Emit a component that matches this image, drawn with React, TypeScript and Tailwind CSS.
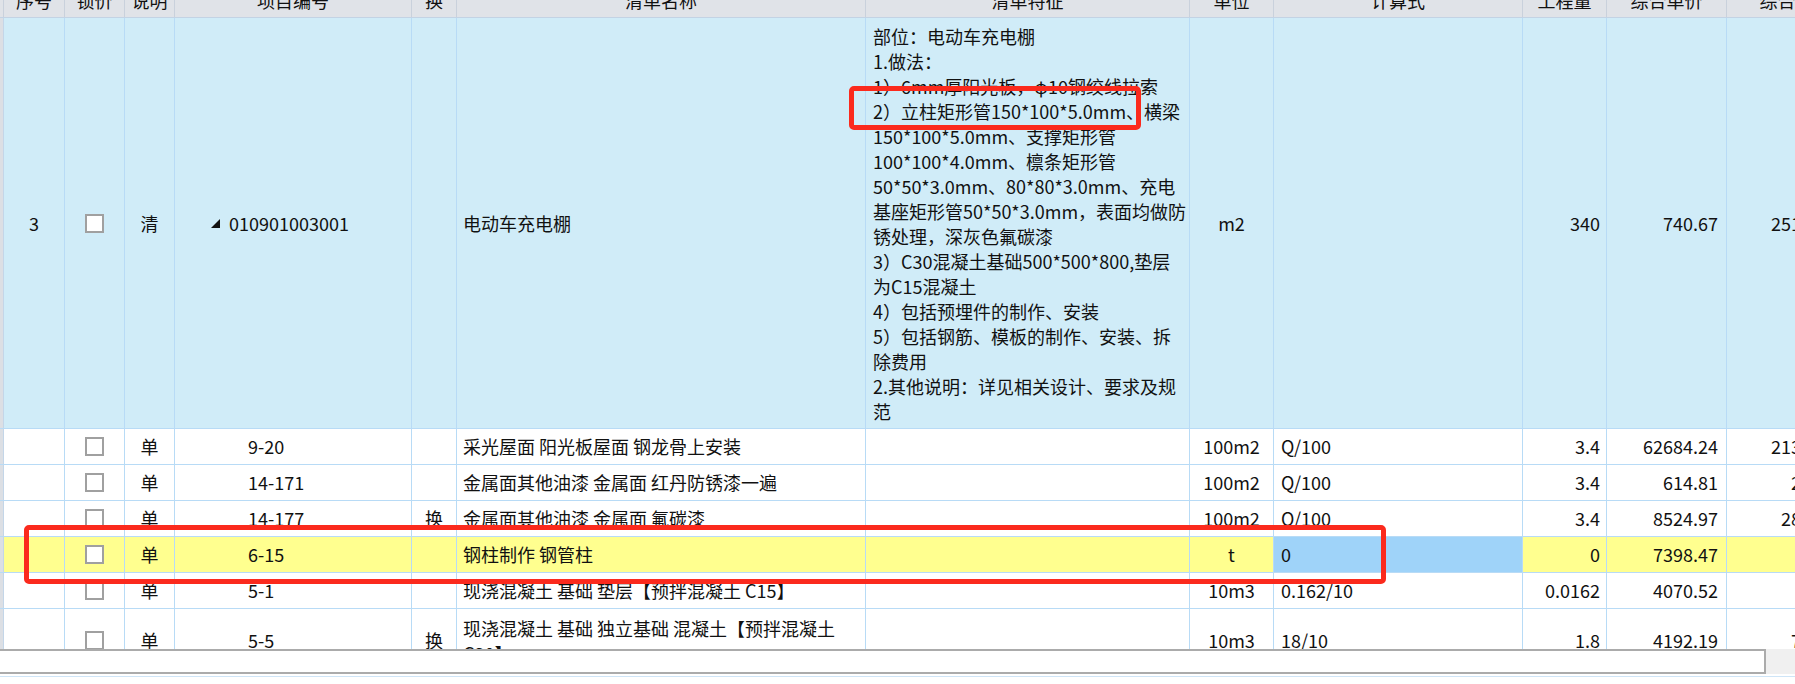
import React from "react";

const W = {
  seq: "w-[61px]",
  lock: "w-[60px]",
  cat: "w-[50px]",
  code: "w-[237px]",
  swap: "w-[45px]",
  name: "w-[409px]",
  feat: "w-[324px]",
  unit: "w-[84px]",
  expr: "w-[249px]",
  qty: "w-[84px]",
  price: "w-[120px]",
  total: "w-[138px]",
};

const cellBase = "shrink-0 h-full flex items-center border-r border-[#b8dbf6] whitespace-nowrap overflow-hidden";

const FEATURE_LINES = [
  "部位：电动车充电棚",
  "1.做法：",
  "1）6mm厚阳光板，φ10钢绞线拉索",
  "2）立柱矩形管150*100*5.0mm、横梁",
  "150*100*5.0mm、支撑矩形管",
  "100*100*4.0mm、檩条矩形管",
  "50*50*3.0mm、80*80*3.0mm、充电",
  "基座矩形管50*50*3.0mm，表面均做防",
  "锈处理，深灰色氟碳漆",
  "3）C30混凝土基础500*500*800,垫层",
  "为C15混凝土",
  "4）包括预埋件的制作、安装",
  "5）包括钢筋、模板的制作、安装、拆",
  "除费用",
  "2.其他说明：详见相关设计、要求及规",
  "范",
];

type Row = {
  code: string;
  swap?: string;
  name: string[];
  unit: string;
  expr: string;
  qty: string;
  price: string;
  total: string;
  yellow?: boolean;
  tall?: boolean;
};

const ROWS: Row[] = [
  { code: "9-20", name: ["采光屋面 阳光板屋面 钢龙骨上安装"], unit: "100m2", expr: "Q/100", qty: "3.4", price: "62684.24", total: "213126.42" },
  { code: "14-171", name: ["金属面其他油漆 金属面 红丹防锈漆一遍"], unit: "100m2", expr: "Q/100", qty: "3.4", price: "614.81", total: "2090.35" },
  { code: "14-177", swap: "换", name: ["金属面其他油漆 金属面 氟碳漆"], unit: "100m2", expr: "Q/100", qty: "3.4", price: "8524.97", total: "28984.90" },
  { code: "6-15", name: ["钢柱制作 钢管柱"], unit: "t", expr: "0", qty: "0", price: "7398.47", total: "0", yellow: true },
  { code: "5-1", name: ["现浇混凝土 基础 垫层【预拌混凝土 C15】"], unit: "10m3", expr: "0.162/10", qty: "0.0162", price: "4070.52", total: "65.94" },
  { code: "5-5", swap: "换", name: ["现浇混凝土 基础 独立基础 混凝土【预拌混凝土", "C30】"], unit: "10m3", expr: "18/10", qty: "1.8", price: "4192.19", total: "7545.94", tall: true },
];

function Checkbox() {
  return <div className="w-[19px] h-[19px] border-2 border-[#a0a0a0] bg-white" />;
}

function Spacer() {
  return <div className="shrink-0 w-[4px] h-full bg-[#dcdfe4] border-r border-[#c4d6e8]" />;
}

function HeaderCell({ w, label }: { w: string; label: string }) {
  return (
    <div className={`shrink-0 h-full flex items-end justify-center pb-[4px] border-r border-[#c9d1dc] overflow-hidden whitespace-nowrap ${w}`}>
      <span className="leading-[25px]">{label}</span>
    </div>
  );
}

function Header() {
  return (
    <div className="flex w-[1865px] h-[18px] bg-[#e0e3e8] border-b border-[#c3d3e4] overflow-hidden">
      <div className="shrink-0 w-[4px] h-full bg-[#e0e3e8] border-r border-[#c9d1dc]" />
      <HeaderCell w={W.seq} label="序号" />
      <HeaderCell w={W.lock} label="锁价" />
      <HeaderCell w={W.cat} label="说明" />
      <HeaderCell w={W.code} label="项目编号" />
      <HeaderCell w={W.swap} label="换" />
      <HeaderCell w={W.name} label="清单名称" />
      <HeaderCell w={W.feat} label="清单特征" />
      <HeaderCell w={W.unit} label="单位" />
      <HeaderCell w={W.expr} label="计算式" />
      <HeaderCell w={W.qty} label="工程量" />
      <HeaderCell w={W.price} label="综合单价" />
      <HeaderCell w={W.total} label="综合合价" />
    </div>
  );
}

function BigRow() {
  return (
    <div className="flex w-[1865px] h-[411px] bg-[#d0ecf8] border-b border-[#b8dbf6]">
      <Spacer />
      <div className={`${cellBase} ${W.seq} justify-center`}>3</div>
      <div className={`${cellBase} ${W.lock} justify-center`}>
        <Checkbox />
      </div>
      <div className={`${cellBase} ${W.cat} justify-center`}>清</div>
      <div className={`${cellBase} ${W.code} pl-[36px]`}>
        <svg width="9" height="9" viewBox="0 0 9 9" className="shrink-0">
          <polygon points="9,0 9,9 0,9" fill="#111" />
        </svg>
        <span className="ml-[9px]">010901003001</span>
      </div>
      <div className={`${cellBase} ${W.swap} justify-center`} />
      <div className={`${cellBase} ${W.name} pl-[6px]`}>电动车充电棚</div>
      <div className={`shrink-0 h-full flex flex-col border-r border-[#b8dbf6] overflow-hidden whitespace-nowrap pt-[6px] pl-[7px] ${W.feat}`}>
        {FEATURE_LINES.map((l, i) => (
          <div key={i} className="h-[25px] leading-[25px]">
            {l}
          </div>
        ))}
      </div>
      <div className={`${cellBase} ${W.unit} justify-center`}>m2</div>
      <div className={`${cellBase} ${W.expr} pl-[7px]`} />
      <div className={`${cellBase} ${W.qty} justify-end pr-[6px]`}>340</div>
      <div className={`${cellBase} ${W.price} justify-end pr-[8px]`}>740.67</div>
      <div className={`${cellBase} ${W.total} justify-end pr-[8px]`}>251827.80</div>
    </div>
  );
}

function DataRow({ r }: { r: Row }) {
  const bg = r.yellow ? "bg-[#ffff8f]" : "bg-white";
  const h = r.tall ? "h-[64px]" : "h-[36px]";
  return (
    <div className={`flex w-[1865px] ${h} ${bg} border-b border-[#b8dbf6]`}>
      <Spacer />
      <div className={`${cellBase} ${W.seq} justify-center`} />
      <div className={`${cellBase} ${W.lock} justify-center`}>
        <Checkbox />
      </div>
      <div className={`${cellBase} ${W.cat} justify-center`}>单</div>
      <div className={`${cellBase} ${W.code} pl-[73px]`}>{r.code}</div>
      <div className={`${cellBase} ${W.swap} justify-center`}>{r.swap ?? ""}</div>
      <div className={`shrink-0 h-full flex flex-col justify-center border-r border-[#b8dbf6] overflow-hidden whitespace-nowrap pl-[6px] ${W.name}`}>
        {r.name.map((n, i) => (
          <div key={i} className="leading-[25px]">
            {n}
          </div>
        ))}
      </div>
      <div className={`${cellBase} ${W.feat}`} />
      <div className={`${cellBase} ${W.unit} justify-center`}>{r.unit}</div>
      <div className={`${cellBase} ${W.expr} pl-[7px] ${r.yellow ? "bg-[#9fd3f9]" : ""}`}>{r.expr}</div>
      <div className={`${cellBase} ${W.qty} justify-end pr-[6px]`}>{r.qty}</div>
      <div className={`${cellBase} ${W.price} justify-end pr-[8px]`}>{r.price}</div>
      <div className={`${cellBase} ${W.total} justify-end pr-[8px]`}>{r.total}</div>
    </div>
  );
}

export default function App() {
  return (
    <div className="relative w-[1795px] h-[684px] overflow-hidden bg-white text-[#111] text-[18px] leading-[25px] font-normal font-['Noto_Sans_CJK_SC','Noto_Sans',sans-serif]">
      <div className="h-[649px] overflow-hidden">
        <Header />
        <BigRow />
        {ROWS.map((r) => (
          <DataRow key={r.code} r={r} />
        ))}
      </div>
      <div className="flex h-[25px]">
        <div className="w-[1766px] h-full bg-white border-t-2 border-b-2 border-r-2 border-[#ababab]" />
        <div className="flex-1 h-full bg-[#f0f0f0]" />
      </div>
      <div className="h-[2px] bg-white" />
      <div className="h-[1px] bg-[#cfe5f7]" />

      <div className="absolute left-[849px] top-[86px] w-[292px] h-[44px] border-[5px] border-[#fb2a1d] rounded-[5px]" />
      <div className="absolute left-[24px] top-[525px] w-[1362px] h-[59px] border-[5px] border-[#fb2a1d] rounded-[5px]" />
    </div>
  );
}
